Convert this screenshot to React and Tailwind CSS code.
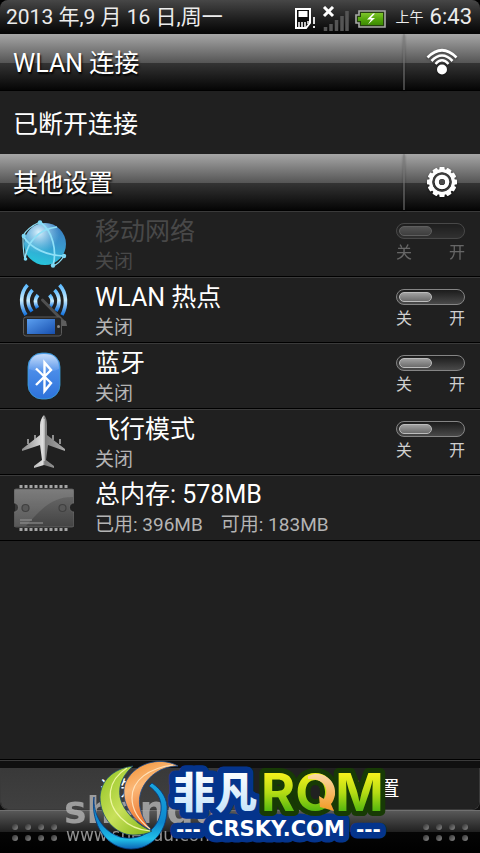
import { useState } from 'react';

const SimIcon = () => (
  <svg width="22" height="24" viewBox="0 0 22 24" aria-hidden="true">
    <path d="M2 2h14v14l-4 5H2z" fill="#0d0d0d" stroke="#fff" strokeWidth="2" />
    <path d="M4.500 4h9v6h-9z" fill="#fff" />
    <path d="M5 15v5M8 15v5M11 15v5M14 14v3" stroke="#fff" strokeWidth="1.500" />
    <path d="M20 10v7M20 19v2" stroke="#ddd" strokeWidth="2" />
  </svg>
);

const SignalIcon = () => (
  <svg width="27" height="26" viewBox="0 0 27 26" aria-hidden="true">
    <path d="M3.500 21v4M9 18v7M14.500 14v11M20 10v15M25 5v20" stroke="#555" strokeWidth="3.500" />
    <path d="M2 1l9 9M11 1l-9 9" stroke="#fff" strokeWidth="3" />
  </svg>
);

const BatteryIcon = () => (
  <svg width="31" height="18" viewBox="0 0 31 18" aria-hidden="true">
    <defs>
      <linearGradient id="battery" x1="0" y1="0" x2="0" y2="1">
        <stop offset="0" stopColor="#7fc52c" />
        <stop offset="0.500" stopColor="#55a80c" />
        <stop offset="1" stopColor="#3c8a02" />
      </linearGradient>
    </defs>
    <path d="M4 1h26v16H4v-4H1V5h3z" fill="#26400f" stroke="#a8a8a8" strokeWidth="1.600" />
    <path d="M6 3h22v12H6v-4H3V7h3z" fill="url(#battery)" />
    <path d="M18 3.500l-6 6h4l-3 5 7-6.500h-4l4-4.500z" fill="#fff" />
  </svg>
);

const WifiIcon = () => (
  <svg width="32" height="28" viewBox="0 0 32 28" aria-hidden="true">
    <g fill="none" stroke="#fff">
      <path d="M1.500 9.500Q16-5 30.500 9.500" strokeWidth="2.600" />
      <path d="M5.500 13Q16 2 26.500 13" strokeWidth="2.600" />
      <path d="M9.500 16Q16 8.500 22.500 16" strokeWidth="2.400" />
    </g>
    <circle cx="16" cy="21.500" r="5" fill="#fff" />
  </svg>
);

const teeth = [0, 30, 60, 90, 120, 150, 180, 210, 240, 270, 300, 330];

const GearIcon = () => (
  <svg width="30" height="30" viewBox="0 0 30 30" aria-hidden="true">
    {teeth.map(a => (
      <rect key={a} x="12.400" y="0" width="5.200" height="5" rx="0.800" fill="#fff" transform={`rotate(${a} 15 15)`} />
    ))}
    <circle cx="15" cy="15" r="11.300" fill="none" stroke="#fff" strokeWidth="3.400" />
    <circle cx="15" cy="15" r="9" fill="none" stroke="#3c3c3c" strokeWidth="1.500" />
    <circle cx="15" cy="15" r="5.200" fill="none" stroke="#fff" strokeWidth="4.200" />
    <circle cx="15" cy="15" r="2.800" fill="#4a4a4a" />
  </svg>
);

const GlobeIcon = () => (
  <svg width="46" height="50" viewBox="0 0 46 50" aria-hidden="true">
    <defs>
      <linearGradient id="globe" x1="0.700" y1="0" x2="0.400" y2="1">
        <stop offset="0" stopColor="#3b7dc0" />
        <stop offset="0.450" stopColor="#3a97cd" />
        <stop offset="1" stopColor="#27c6dc" />
      </linearGradient>
      <radialGradient id="globeShine" cx="0.350" cy="0.220" r="0.500">
        <stop offset="0" stopColor="#e4f7ff" stopOpacity="0.950" />
        <stop offset="1" stopColor="#a5dcf5" stopOpacity="0" />
      </radialGradient>
    </defs>
    <circle cx="24" cy="25" r="21" fill="url(#globe)" />
    <circle cx="24" cy="25" r="21" fill="url(#globeShine)" />
    <g fill="none" stroke="#8fe0f7" strokeWidth="1.700">
      <path d="M19 3C32 12 36 32 32 47" />
      <path d="M2 17C10 30 28 37 43 37" />
      <path d="M4 40C6 23 18 10 36 8" />
      <path d="M19 3C10 7 5 11 2 17M2 17C2 26 2 33 4 40M43 37C40 42 37 45 32 47" strokeWidth="1.200" />
    </g>
    <g fill="#7fd8f5">
      <circle cx="19" cy="3.500" r="2.200" />
      <circle cx="2.800" cy="17" r="2.200" />
      <circle cx="43" cy="37" r="2.200" />
      <circle cx="32" cy="46.500" r="2.200" />
      <circle cx="4.500" cy="40" r="1.800" />
    </g>
  </svg>
);

const HotspotIcon = () => (
  <svg width="50" height="54" viewBox="0 0 50 54" aria-hidden="true">
    <defs>
      <linearGradient id="waves" x1="0" y1="0" x2="0" y2="1">
        <stop offset="0" stopColor="#5ab9ff" />
        <stop offset="0.500" stopColor="#c9edff" />
        <stop offset="1" stopColor="#1273e0" />
      </linearGradient>
      <linearGradient id="screen" x1="0" y1="0" x2="1" y2="1">
        <stop offset="0" stopColor="#5b9ff0" />
        <stop offset="1" stopColor="#174fae" />
      </linearGradient>
    </defs>
    <g fill="none" stroke="url(#waves)" strokeWidth="3.600">
      <path d="M8.500 2C1 10 1 23 7 32" />
      <path d="M13.500 7C7.500 13 8 22 13 28.500" />
      <path d="M19 12C15.500 16 15.500 20 18.500 25" />
      <path d="M40.500 2C48 10 48 23 43 32" />
      <path d="M35.500 7C41.500 13 41 22 37 28" />
      <path d="M30.500 12C34 16 34 20 31 24" />
    </g>
    <path d="M23.500 17L44 38" stroke="#505050" strokeWidth="3" strokeLinecap="round" />
    <path d="M34 34l13 4 1 5h-8z" fill="#5e5e5e" />
    <rect x="4.500" y="34" width="38" height="19" rx="2.500" fill="#262626" stroke="#5b5b5b" />
    <rect x="8" y="36" width="28" height="15" fill="url(#screen)" />
    <circle cx="39.500" cy="43.500" r="1.500" fill="#888" />
  </svg>
);

const BluetoothIcon = () => (
  <svg width="34" height="48" viewBox="0 0 34 48" aria-hidden="true">
    <defs>
      <linearGradient id="bt" x1="0" y1="0" x2="0" y2="1">
        <stop offset="0" stopColor="#5d9df2" />
        <stop offset="1" stopColor="#2d72da" />
      </linearGradient>
      <linearGradient id="btShine" x1="0" y1="0" x2="0" y2="1">
        <stop offset="0" stopColor="#fff" stopOpacity="0.650" />
        <stop offset="1" stopColor="#fff" stopOpacity="0.050" />
      </linearGradient>
    </defs>
    <rect x="1" y="1" width="32" height="46" rx="14" fill="url(#bt)" stroke="#3aa0d8" strokeWidth="0.800" />
    <path d="M2 17C2 6 7 2 17 2s15 4 15 15c-8 4-22 4-30 0z" fill="url(#btShine)" />
    <path d="M9 16.500L24 31 17.500 39V10.500L24 18 9 33" fill="none" stroke="#fff" strokeWidth="2.400" />
  </svg>
);

const PlaneIcon = () => (
  <svg width="46" height="56" viewBox="0 0 46 56" aria-hidden="true">
    <defs>
      <linearGradient id="plane" x1="0" y1="0" x2="1" y2="0">
        <stop offset="0" stopColor="#8a8a8a" />
        <stop offset="0.480" stopColor="#dedede" />
        <stop offset="0.530" stopColor="#7d7d7d" />
        <stop offset="1" stopColor="#a8a8a8" />
      </linearGradient>
    </defs>
    <path d="M7 25v5M14 21v5M32 21v5M39 25v5" stroke="#8f8f8f" strokeWidth="2" />
    <path d="M23 1c2 2 3 6 3 10v10l18 14v2L27 31l-2 15 8 6v2l-10-3-10 3v-2l8-6-2-15L1 37v-2l18-14V11c0-4 2-8 4-10z" fill="url(#plane)" />
    <path d="M23 5v42" stroke="#e8e8e8" strokeWidth="1" />
  </svg>
);

const pins = [7, 12, 17, 22, 27, 32, 37, 42, 47, 52];

const ChipIcon = () => (
  <svg width="60" height="48" viewBox="0 0 60 48" aria-hidden="true">
    <defs>
      <linearGradient id="chip" x1="0" y1="0" x2="0" y2="1">
        <stop offset="0" stopColor="#6d6d6d" />
        <stop offset="1" stopColor="#434343" />
      </linearGradient>
    </defs>
    {pins.map(x => (
      <path key={x} d={`M${x} 1v3M${x} 44v3`} stroke="#a5a5a5" strokeWidth="3" />
    ))}
    <path d="M2 5h56a2 2 0 0 1 2 2v12a4 4 0 0 0 0 9v13a2 2 0 0 1-2 2H2a2 2 0 0 1-2-2V28a4 4 0 0 0 0-9V7a2 2 0 0 1 2-2z" fill="url(#chip)" stroke="#777" strokeWidth="0.600" />
    <path d="M1 6h58v7C38 13 28 24 12 42H1z" fill="#fff" opacity="0.110" />
    <circle cx="11.500" cy="24" r="3.500" fill="#585858" stroke="#404040" strokeWidth="1.200" />
    <circle cx="48.500" cy="24" r="3.500" fill="#585858" stroke="#404040" strokeWidth="1.200" />
    <path d="M6 36h12M6 39h23" stroke="#979797" strokeWidth="1.200" />
  </svg>
);

const SectionHeader = ({ title, label, children }) => (
  <div className="flex h-[57px] items-stretch border-b border-black bg-[linear-gradient(to_bottom,#a6a6a6_0%,#565656_51%,#343434_52%,#050505_100%)]">
    <h2 className="flex flex-1 items-center px-[13px] pt-1 text-[25px] [text-shadow:1px_2px_2px_#000]">{title}</h2>
    <button aria-label={label} className="flex w-[77px] items-center justify-center border-l-2 border-[#808080]/50 pr-[2px] drop-shadow-[0_1px_1px_rgba(0,0,0,0.5)]">
      {children}
    </button>
  </div>
);

const Toggle = ({ id, checked, disabled, onChange }) => (
  <div className={disabled ? 'w-[69px] opacity-40' : 'w-[69px]'}>
    <input
      id={id}
      type="checkbox"
      checked={checked}
      disabled={disabled}
      onChange={onChange}
      className="block h-4 w-full appearance-none rounded-full border border-[#858585] bg-linear-to-b from-[#1c1c1c] to-[#4a4a4a] p-[2px] before:block before:h-[10px] before:w-[33px] before:rounded-full before:border before:border-[#bcbcbc] before:bg-linear-to-b before:from-[#a0a0a0] before:to-[#6c6c6c] checked:before:ml-auto"
    />
    <div className="mt-1 mb-[2px] flex justify-between text-[16px] leading-5 text-[#cfcfcf]">
      <span>关</span>
      <span>开</span>
    </div>
  </div>
);

const settings = [
  { id: 'mobile', title: '移动网络', icon: <GlobeIcon />, disabled: true },
  { id: 'hotspot', title: 'WLAN 热点', icon: <HotspotIcon /> },
  { id: 'bluetooth', title: '蓝牙', icon: <BluetoothIcon /> },
  { id: 'airplane', title: '飞行模式', icon: <PlaneIcon /> },
];

const rowClass = 'flex h-[66px] items-center border-t border-b border-t-[#3a3a3a] border-b-black pr-[15px]';

const Dots = () => (
  <div className="grid grid-cols-4 gap-x-[7px] gap-y-[5px]">
    {[1, 2, 3, 4, 5, 6, 7, 8].map(n => (
      <span key={n} className="size-[6px] rounded-full bg-linear-to-br from-[#303030] to-[#8a8a8a]" />
    ))}
  </div>
);

// Site watermark lying over the tab bar
const Watermark = () => (
  <svg className="pointer-events-none absolute bottom-0 left-[60px]" width="330" height="98" viewBox="60 755 330 98">
    <defs>
      <linearGradient id="green" x1="0" y1="0" x2="1" y2="1">
        <stop offset="0" stopColor="#8fc320" />
        <stop offset="0.500" stopColor="#c8e05a" />
        <stop offset="1" stopColor="#7db414" />
      </linearGradient>
      <linearGradient id="orange" x1="0" y1="0" x2="0.400" y2="1">
        <stop offset="0" stopColor="#f08a28" />
        <stop offset="0.400" stopColor="#fbb878" />
        <stop offset="1" stopColor="#e8641a" />
      </linearGradient>
      <linearGradient id="ring" x1="0" y1="0" x2="0" y2="1">
        <stop offset="0" stopColor="#18a6df" />
        <stop offset="0.600" stopColor="#0d86cc" />
        <stop offset="0.850" stopColor="#21c0e8" />
        <stop offset="1" stopColor="#0b62b4" />
      </linearGradient>
      <linearGradient id="rom" gradientUnits="userSpaceOnUse" x1="0" y1="773" x2="0" y2="812">
        <stop offset="0" stopColor="#f6f21c" />
        <stop offset="0.500" stopColor="#b5dc14" />
        <stop offset="1" stopColor="#4fb50e" />
      </linearGradient>
      <linearGradient id="white" gradientUnits="userSpaceOnUse" x1="0" y1="770" x2="0" y2="813">
        <stop offset="0" stopColor="#fff" />
        <stop offset="1" stopColor="#c4e3fa" />
      </linearGradient>
      <linearGradient id="arrow" x1="0" y1="0" x2="0" y2="1">
        <stop offset="0" stopColor="#fbd9a4" />
        <stop offset="1" stopColor="#f39a24" />
      </linearGradient>
    </defs>
    <g fill="#b4b4b4" opacity="0.800" fontFamily="DejaVu Sans, sans-serif">
      <text x="64" y="823" fontSize="38" fontWeight="700">shendu</text>
      <text x="66" y="841" fontSize="17">www.shendu.com</text>
    </g>

    <path d="M94 797C93 814 102 831 120 837C140 842 159 830 161 810C162 799 157 792 149 786L152 783C162 790 168 799 167 811C166 833 151 849 131 849C107 849 90 824 94 797Z" fill="url(#ring)" stroke="#063a80" strokeWidth="0.800" />
    <path d="M133 766C112 769 101 781 100 797C100 818 116 835 133 835C141 835 147 834 152 831C139 826 123 812 120 797C118 784 124 774 133 766Z" fill="url(#green)" stroke="#1d4c6e" strokeWidth="0.800" />
    <path d="M127 768C108 780 104 801 121 818C129 826 139 830 150 831" fill="none" stroke="#edf6a0" strokeWidth="1.200" />
    <path d="M178 766C158 755 132 765 125 784C120 801 132 822 151 830C141 817 136 803 142 789C148 776 161 766 178 766Z" fill="url(#orange)" stroke="#1d4c8e" strokeWidth="0.800" />
    <path d="M173 765C149 768 132 780 132 798C132 812 141 822 150 829" fill="none" stroke="#ffe0b8" strokeWidth="1.200" />

    <g strokeLinejoin="round">
      <g stroke="#04348c" strokeWidth="13" fill="#fff" style={{ paintOrder: 'stroke' }}>
        <text x="173" y="808" fontSize="42" fontWeight="900" fontFamily="Noto Sans CJK SC, sans-serif" fill="url(#white)">非凡</text>
        <text x="176" y="836" fontSize="20" fontWeight="700" fontFamily="DejaVu Sans, sans-serif">---</text>
        <text x="356" y="836" fontSize="20" fontWeight="700" fontFamily="DejaVu Sans, sans-serif">---</text>
        <text x="208" y="836" fontSize="21" fontWeight="700" fontFamily="DejaVu Sans, sans-serif">CRSKY.COM</text>
      </g>
      <text x="261" y="811" fontSize="52" fontWeight="700" fontFamily="Inter, sans-serif" fill="url(#rom)" stroke="#173a05" strokeWidth="10" style={{ paintOrder: 'stroke' }}>ROM</text>
      <path d="M308 776C323 769 337 781 335 795C334 799 333 802 331 804L334 811L320 807L319 796L324 799C330 790 325 778 308 779Z" fill="url(#arrow)" />
    </g>
  </svg>
);

export default function App() {
  const [enabled, setEnabled] = useState({});

  const toggle = (id) => setEnabled(prev => ({ ...prev, [id]: !prev[id] }));

  return (
    <div className="relative flex min-h-screen flex-col bg-[#202020] font-['Roboto','Noto_Sans_CJK_SC',sans-serif] text-white">
      {/* Status bar */}
      <div className="bg-black">
        <header className="flex h-[34px] items-center rounded-t-lg bg-linear-to-b from-[#474747] to-[#050505] px-[6px] text-[22px] leading-8 text-[#ececec]">
          <span className="flex-1 text-[21px]">2013 年,9 月 16 日,周一</span>
          <div className="flex items-center gap-[6px] pr-[2px]">
            <div className="flex items-center gap-[6px] pt-[3px]">
              <SimIcon />
              <SignalIcon />
              <BatteryIcon />
            </div>
            <span className="ml-1 text-[14px]">上午</span>
            <span>6:43</span>
          </div>
        </header>
      </div>

      {/* WLAN */}
      <SectionHeader title="WLAN 连接" label="WLAN">
        <WifiIcon />
      </SectionHeader>
      <p className="flex h-[63px] items-center px-[13px] pt-1 text-[25px]">已断开连接</p>

      {/* Other settings */}
      <SectionHeader title="其他设置" label="设置">
        <GearIcon />
      </SectionHeader>
      <ul>
        {settings.map(item => (
          <li key={item.id} className={rowClass}>
            <div className="flex w-[88px] shrink-0 justify-center">{item.icon}</div>
            <label htmlFor={item.id} className={item.disabled ? 'flex-1 pt-1 pl-[7px] text-[#484848]' : 'flex-1 pt-1 pl-[7px]'}>
              <span className="block text-[25px] leading-8">{item.title}</span>
              <span className={item.disabled ? 'block text-[19px] leading-7' : 'block text-[19px] leading-7 text-[#b4b4b4]'}>
                {enabled[item.id] ? '开启' : '关闭'}
              </span>
            </label>
            <Toggle id={item.id} checked={!!enabled[item.id]} disabled={item.disabled} onChange={() => toggle(item.id)} />
          </li>
        ))}
        <li className={rowClass}>
          <div className="flex w-[88px] shrink-0 justify-center">
            <ChipIcon />
          </div>
          <div className="flex-1 pt-[2px] pl-[7px]">
            <div className="text-[25px] leading-8">总内存: 578MB</div>
            <div className="flex gap-[18px] text-[19px] leading-7 text-[#b4b4b4]">
              <span>已用: 396MB</span>
              <span>可用: 183MB</span>
            </div>
          </div>
        </li>
      </ul>

      {/* Bottom tabs */}
      <footer className="mt-auto">
        <div className="border-t border-black bg-[#101010] pt-2 shadow-[inset_0_1px_0_#3a3a3a]">
          <div className="grid h-[42px] grid-cols-2 overflow-hidden rounded-b-lg border-x border-b border-[#3a3a3a] text-[20px]">
            <button className="bg-linear-to-b from-[#393939] to-[#404040]">通知</button>
            <button className="bg-[#212121]">快速设置</button>
          </div>
        </div>
        <div className="flex h-[43px] items-center justify-between border-t border-[#707070] bg-[linear-gradient(to_bottom,#585858_0%,#202020_50%,#050505_51%,#000_100%)] px-3">
          <Dots />
          <Dots />
        </div>
      </footer>

      <Watermark />
    </div>
  );
}
